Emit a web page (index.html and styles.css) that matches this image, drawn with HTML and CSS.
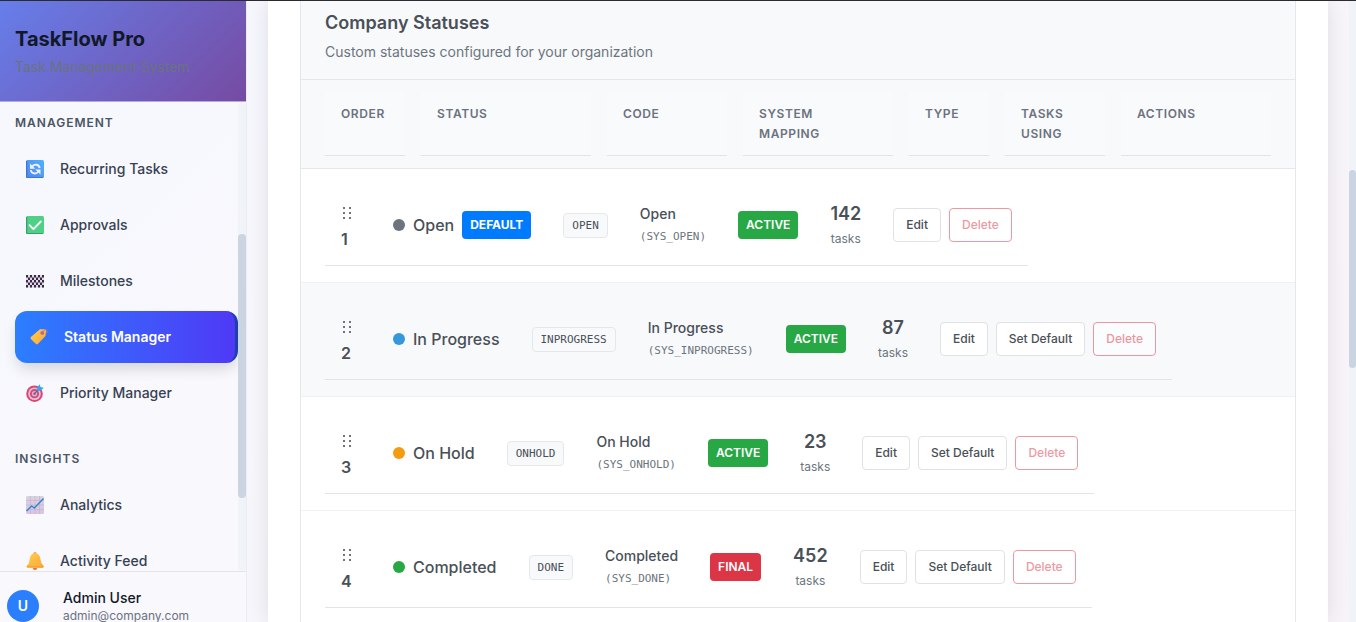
FILE: index.html
```html
<!DOCTYPE html>
<html lang="en">
<head>
<meta charset="utf-8">
<title>TaskFlow Pro - Status Manager</title>
<link rel="stylesheet" href="styles.css">
</head>
<body>
<svg class="defs" aria-hidden="true">
  <defs>
    <linearGradient id="blue" x1="1" y1="0" x2="0" y2="1"><stop offset="0" stop-color="#4fb2ff"/><stop offset="1" stop-color="#4f86ee"/></linearGradient>
    <linearGradient id="gold" x1="0" y1="0" x2="1" y2="1"><stop offset="0" stop-color="#ffcf4a"/><stop offset="1" stop-color="#fba63c"/></linearGradient>
    <linearGradient id="chart" x1="0" y1="0" x2="0" y2="1"><stop offset="0" stop-color="#d9d2e0"/><stop offset="1" stop-color="#d9c3e6"/></linearGradient>
    <symbol id="grip" viewBox="0 0 20 24">
      <path fill="#6c757d" d="M2 6h2v2H2zM8 6h2v2H8zM2 11h2v2H2zM8 11h2v2H8zM2 16h2v2H2zM8 16h2v2H8z"/>
    </symbol>
  </defs>
</svg>
<div class="app">
  <aside class="sidebar">
    <header class="brand">
      <h1 class="brand-name">TaskFlow Pro</h1>
      <p class="brand-sub">Task Management System</p>
    </header>
    <div class="nav-wrap">
      <nav class="nav">
        <h2 class="nav-heading">Management</h2>
        <a class="nav-item" href="#recurring">
          <svg class="nav-icon" viewBox="0 0 18 18"><rect width="18" height="18" rx="1.5" fill="url(#blue)"/><path d="M0 1v15.5Q0 18 1.500 18H17v-1H1.200V1z" fill="#3f74cf"/><path d="M6 6.600Q8 4.300 10.500 4.700q2.700.5 3.200 3.300M12.500 11.500Q10.500 13.900 8 13.400 5.300 12.900 4.800 10.200" fill="none" stroke="#f3efff" stroke-width="1.900"/><path d="M4 3.600v5.200h5.200zM14.500 14.600V9.400H9.300z" fill="#f3efff"/></svg>
          <span>Recurring Tasks</span></a>
        <a class="nav-item" href="#approvals">
          <svg class="nav-icon" viewBox="0 0 18 18"><rect width="18" height="18" rx="1.500" fill="#4fd087"/><path d="M0 1v15.500Q0 18 1.500 18H17v-1H1.200V1z" fill="#3a9d6b"/><path d="M3.500 9.200l3.900 3.900 7.400-7.600" fill="none" stroke="#fff" stroke-width="1.800" stroke-linecap="round" stroke-linejoin="round"/></svg>
          <span>Approvals</span></a>
        <a class="nav-item" href="#milestones">
          <svg class="nav-icon" viewBox="0 0 18 18"><path fill="#e3d5ec" d="M0 3h18v12.600H0z"/><path fill="#352d3d" d="M0 3h2v2.500H0zM4 3h2v2.500H4zM8 3h2v2.500H8zM12 3h2v2.500h-2zM16 3h2v2.500h-2zM2 5.500h2V8H2zM6 5.500h2V8H6zM10 5.500h2V8h-2zM14 5.500h2V8h-2zM0 8h2v2.500H0zM4 8h2v2.500H4zM8 8h2v2.500H8zM12 8h2v2.500h-2zM16 8h2v2.500h-2zM2 10.500h2V13H2zM6 10.500h2V13H6zM10 10.500h2V13h-2zM14 10.500h2V13h-2zM0 13h2v2.500H0zM4 13h2v2.500H4zM8 13h2v2.500H8zM12 13h2v2.500h-2zM16 13h2v2.500h-2z"/></svg>
          <span>Milestones</span></a>
        <a class="nav-item active" href="#statuses" aria-current="page">
          <svg class="nav-icon" viewBox="0 0 18 18"><path d="M10 1.300L14.600 1.200q1.500.2 1.600 1.700l-.5 4.400q-.1.600-.5 1L7.900 15.900q-1 .8-1.900 0L.9 10.900q-.8-.9 0-1.800z" fill="url(#gold)"/><circle cx="12.300" cy="4.900" r="1.900" fill="#c8618f"/><path d="M12.300 4.500Q13.500 1.300 16 1.600q2 .6 1.300 2.700-.7 1.700-2.300 2" fill="none" stroke="#8d83b5" stroke-width=".8"/></svg>
          <span>Status Manager</span></a>
        <a class="nav-item" href="#priorities">
          <svg class="nav-icon" viewBox="0 0 18 18"><circle cx="8.500" cy="9.700" r="8.300" fill="#e0456f"/><circle cx="8.500" cy="9.700" r="6.300" fill="#d9c4dc"/><circle cx="8.500" cy="9.700" r="4.600" fill="#dd4674"/><circle cx="8.500" cy="9.700" r="2.700" fill="#cfb6d2"/><circle cx="8.500" cy="9.700" r="1.300" fill="#e0456f"/><path d="M8.500 9.700L14 4.200" stroke="#3c6fa8" stroke-width="1.200"/><path d="M11.200 6.800l-.4-3.200L13.900.2l.5 2.700 3.400.8-3.200 3.100z" fill="#3ba3ec"/></svg>
          <span>Priority Manager</span></a>
        <h2 class="nav-heading">Insights</h2>
        <a class="nav-item" href="#analytics">
          <svg class="nav-icon" viewBox="0 0 18 18"><rect width="18" height="18" rx="1.500" fill="url(#chart)"/><path d="M4.500 0v18M9 0v18M13.500 0v18M0 4.500h18M0 9h18M0 13.500h18" stroke="#c4b4cf" stroke-width=".7"/><path d="M.6 15l5-5 2.700 2L17.500 2.600" fill="none" stroke="#2f86c9" stroke-width="1.400" stroke-linejoin="round"/></svg>
          <span>Analytics</span></a>
        <a class="nav-item" href="#activity">
          <svg class="nav-icon" viewBox="0 0 18 18"><circle cx="9" cy="15.800" r="2.200" fill="#e8713e"/><circle cx="9" cy="1.700" r="1.600" fill="#f2a03f"/><path d="M9 1.200q4.800.4 5.300 5.300.3 4.500 3.300 7.400.5 2-1 2H1.700q-1.500 0-1-2 3-2.900 3.200-7.400Q4.300 1.600 9 1.200z" fill="url(#gold)"/><path d="M.8 14.500h16.600" stroke="#f5a23c" stroke-width="1"/></svg>
          <span>Activity Feed</span></a>
      </nav>
      <div class="scrollbar nav-scroll"><div class="thumb"></div></div>
    </div>
    <footer class="user">
      <div class="avatar">U</div>
      <div>
        <div class="user-name">Admin User</div>
        <div class="user-mail">admin@company.com</div>
      </div>
    </footer>
  </aside>

  <main class="main">
    <section class="panel">
      <div class="card">
        <header class="card-head">
          <h2 class="card-title">Company Statuses</h2>
          <p class="card-sub">Custom statuses configured for your organization</p>
        </header>
        <table class="statuses">
          <thead>
            <tr><th>Order</th><th>Status</th><th>Code</th><th>System Mapping</th><th>Type</th><th>Tasks Using</th><th>Actions</th></tr>
          </thead>
          <tbody>
            <tr>
              <td><div class="order"><svg class="grip"><use href="#grip"/></svg><b>1</b></div></td>
              <td><div class="status"><i class="dot gray"></i>Open<span class="badge primary">DEFAULT</span></div></td>
              <td><code class="code">OPEN</code></td>
              <td><div class="map-name">Open</div><code class="map-code">(SYS_OPEN)</code></td>
              <td><span class="badge success">ACTIVE</span></td>
              <td><div class="tasks"><b>142</b><span>tasks</span></div></td>
              <td><div class="actions"><button class="btn">Edit</button><button class="btn danger" disabled>Delete</button></div></td>
            </tr>
            <tr>
              <td><div class="order"><svg class="grip"><use href="#grip"/></svg><b>2</b></div></td>
              <td><div class="status"><i class="dot blue"></i>In Progress</div></td>
              <td><code class="code">INPROGRESS</code></td>
              <td><div class="map-name">In Progress</div><code class="map-code">(SYS_INPROGRESS)</code></td>
              <td><span class="badge success">ACTIVE</span></td>
              <td><div class="tasks"><b>87</b><span>tasks</span></div></td>
              <td><div class="actions"><button class="btn">Edit</button><button class="btn">Set Default</button><button class="btn danger" disabled>Delete</button></div></td>
            </tr>
            <tr>
              <td><div class="order"><svg class="grip"><use href="#grip"/></svg><b>3</b></div></td>
              <td><div class="status"><i class="dot orange"></i>On Hold</div></td>
              <td><code class="code">ONHOLD</code></td>
              <td><div class="map-name">On Hold</div><code class="map-code">(SYS_ONHOLD)</code></td>
              <td><span class="badge success">ACTIVE</span></td>
              <td><div class="tasks"><b>23</b><span>tasks</span></div></td>
              <td><div class="actions"><button class="btn">Edit</button><button class="btn">Set Default</button><button class="btn danger" disabled>Delete</button></div></td>
            </tr>
            <tr>
              <td><div class="order"><svg class="grip"><use href="#grip"/></svg><b>4</b></div></td>
              <td><div class="status"><i class="dot green"></i>Completed</div></td>
              <td><code class="code">DONE</code></td>
              <td><div class="map-name">Completed</div><code class="map-code">(SYS_DONE)</code></td>
              <td><span class="badge final">FINAL</span></td>
              <td><div class="tasks"><b>452</b><span>tasks</span></div></td>
              <td><div class="actions"><button class="btn">Edit</button><button class="btn">Set Default</button><button class="btn danger" disabled>Delete</button></div></td>
            </tr>
          </tbody>
        </table>
      </div>
    </section>
  </main>
  <div class="scrollbar page-scroll"><div class="thumb"></div></div>
</div>
</body>
</html>
```

FILE: styles.css
```css
* { box-sizing: border-box; margin: 0; padding: 0; }

body {
  font-family: Inter, "Liberation Sans", sans-serif;
  font-size: 14px;
  line-height: 20px;
  color: #495057;
  overflow: hidden;
}

.defs { position: absolute; width: 0; height: 0; }

.app {
  display: grid;
  grid-template-columns: 247px minmax(0, 1fr) 7px;
  grid-template-rows: minmax(0, 1fr);
  height: 100vh;
  border-top: 1px solid #2b2a33;
  background: linear-gradient(135deg, #f6f8fd, #f8f3f9);
  overflow: hidden;
}

/* Sidebar */
.sidebar {
  display: flex;
  flex-direction: column;
  min-height: 0;
  border-right: 1px solid #ebecf2;
  background: linear-gradient(135deg, #f6f8fd, #f9f8fd);
}

.brand {
  padding: 24px 15px;
  border-bottom: 1px solid #b5a9e4;
  background: linear-gradient(135deg, #667eea, #764ba2);
}

.brand-name { font-size: 20px; line-height: 28px; font-weight: 700; color: #111827; }
.brand-sub { padding-top: 4px; color: #6b7280; }

.nav-wrap { display: flex; flex: 1; min-height: 0; }
.nav { flex: 1; padding-left: 15px; overflow: hidden; }

.nav-heading {
  padding: 12px 0;
  font-size: 12px;
  line-height: 17px;
  font-weight: 600;
  letter-spacing: 1px;
  text-transform: uppercase;
  color: #4b5563;
}

.nav-item + .nav-heading { padding-top: 27px; }

.nav-item {
  display: flex;
  align-items: center;
  gap: 16px;
  height: 52px;
  margin-bottom: 4px;
  padding: 0 11px;
  border-radius: 12px;
  font-weight: 500;
  color: #374151;
  text-decoration: none;
}

.nav-item.active {
  padding: 0 15px;
  border-right: 3px solid #1e40af;
  background: linear-gradient(90deg, #2b7fff, #4f39f6);
  box-shadow: 0 8px 14px -2px rgba(0, 0, 0, 0.14);
  font-weight: 600;
  color: #fff;
}

.nav-icon { width: 18px; height: 18px; }

.scrollbar { background: #f0f4f8; }
.thumb { border-radius: 4px; background: #cbd5e1; }
.nav-scroll { width: 8px; padding-top: 132px; border-radius: 4px; }
.nav-scroll .thumb { height: 264px; }
.page-scroll { padding-top: 169px; }
.page-scroll .thumb { height: 198px; }

.user {
  display: flex;
  align-items: center;
  gap: 24px;
  margin-bottom: -2px;
  padding: 16px 7px 0;
  border-top: 1px solid #e2e5ec;
}

.avatar {
  width: 32px;
  height: 32px;
  border-radius: 50%;
  background: #2b7fff;
  font-weight: 600;
  line-height: 32px;
  text-align: center;
  color: #fff;
}

.user-name { font-weight: 500; color: #111827; }
.user-mail { font-size: 12px; line-height: 16px; color: #6b7280; }

/* Content */
.main { padding: 0 21px; }

.panel {
  height: 100%;
  padding: 0 32px;
  background: #fff;
  box-shadow: 0 0 20px rgba(0, 0, 0, 0.1);
  clip-path: inset(0 -21px);
}

.card { height: 100%; border: 1px solid #e5e8eb; border-width: 0 1px; }

.card-head {
  padding: 8px 24px 16px;
  border-bottom: 1px solid #e5e8eb;
  background: #f8f9fb;
}

.card-title { font-size: 18px; line-height: 28px; font-weight: 600; }
.card-sub { padding-top: 4px; line-height: 22px; color: #6c757d; }

.statuses { border-spacing: 0; }
.statuses, .statuses thead, .statuses tbody { display: block; }

.statuses thead tr {
  display: grid;
  grid-template-columns: 80px minmax(0, 1fr) 120px 150px 80px 100px 150px;
  gap: 16px;
  padding: 12px 24px;
  border-bottom: 1px solid #e5e8eb;
  background: #f8f9fb;
}

.statuses th {
  padding: 12px 16px 11px;
  border-bottom: 1px solid #e1e4e8;
  background: #f9fafb;
  font-size: 12px;
  font-weight: 600;
  letter-spacing: 0.05em;
  text-align: left;
  text-transform: uppercase;
  color: #6b7280;
}

.statuses tbody tr {
  display: block;
  padding: 16px 24px;
  border-bottom: 1px solid #f0f1f3;
}

.statuses tbody tr:nth-child(2) { background: #f8f9fb; }

.statuses td {
  padding: 16px;
  border-bottom: 1px solid #e1e4e8;
  vertical-align: middle;
  white-space: nowrap;
}

.order { display: flex; flex-direction: column; gap: 4px; width: 20px; font-size: 16px; }
.order b, .tasks b { font-weight: 600; }
.grip { width: 20px; height: 24px; }

.status { display: flex; align-items: center; gap: 8px; font-size: 16px; font-weight: 500; }
.dot { width: 12px; height: 12px; border-radius: 50%; }
.dot.gray { background: #6c757d; }
.dot.blue { background: #3498db; }
.dot.orange { background: #f39c12; }
.dot.green { background: #28a745; }

.badge {
  display: inline-block;
  padding: 4px 8px;
  border-radius: 4px;
  font-size: 12px;
  font-weight: 600;
  color: #fff;
}

.badge.primary { background: #007bff; font-weight: 700; }
.badge.success { background: #28a745; }
.badge.final { background: #dc3545; }

.code, .map-code {
  display: block;
  font-family: "DejaVu Sans Mono", monospace;
  font-size: 11px;
}

.code {
  padding: 1px 8px 0;
  border: 1px solid #e5e8eb;
  border-radius: 4px;
  background: #f8f9fb;
  line-height: 22px;
}

.map-name { font-weight: 500; line-height: 24px; }
.map-code { line-height: 22px; color: #6c757d; }

.tasks { display: flex; flex-direction: column; align-items: center; gap: 2px; }
.tasks b { font-size: 18px; line-height: 26px; }
.tasks span { font-size: 12px; color: #6c757d; }

.actions { display: flex; gap: 8px; }

.btn {
  padding: 6px 12px;
  border: 1px solid #dee2e6;
  border-radius: 4px;
  background: #fff;
  font: 500 12px/20px Inter, "Liberation Sans", sans-serif;
  color: #495057;
}

.btn.danger { border-color: #dc3545; color: #dc3545; opacity: 0.5; }
```
